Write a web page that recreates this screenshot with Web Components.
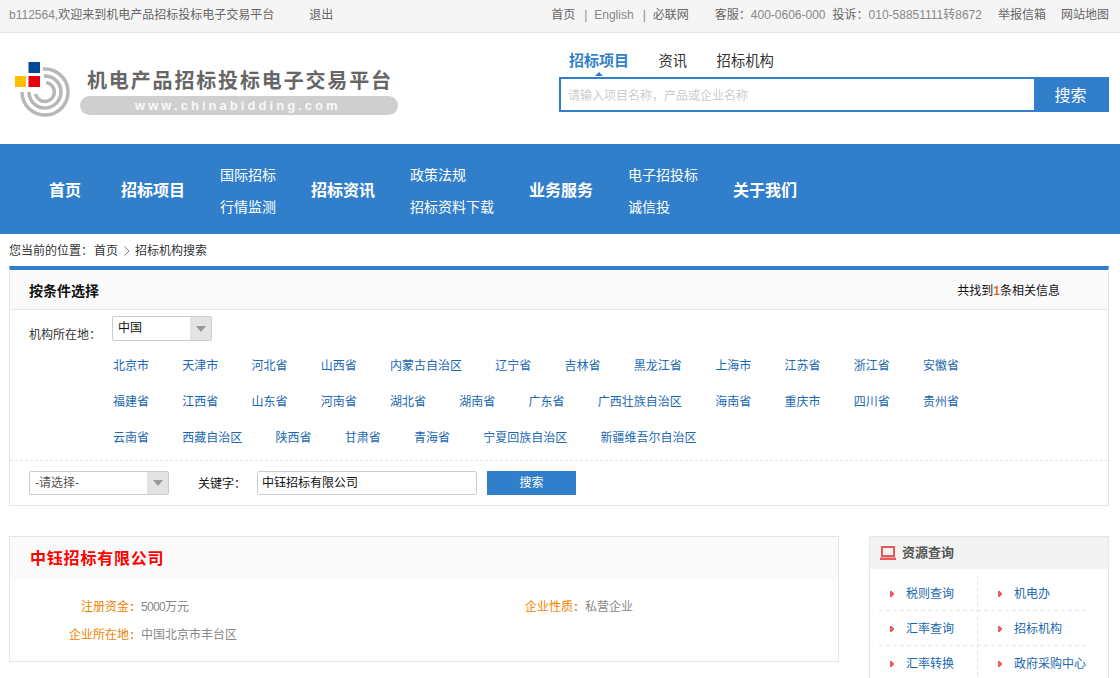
<!DOCTYPE html>
<html lang="zh-CN">
<head>
<meta charset="utf-8">
<title>招标机构搜索</title>
<style>
html,body{margin:0;padding:0;height:678px;overflow:hidden;background:#fff}
body{font:12px/18px "Liberation Sans","Noto Sans CJK SC",sans-serif;color:#333}
</style>
</head>
<body>
<x-topbar></x-topbar>
<x-masthead></x-masthead>
<x-mainnav></x-mainnav>
<x-crumb></x-crumb>
<x-page>
  <x-filter>
    <a>北京市</a><a>天津市</a><a>河北省</a><a>山西省</a><a>内蒙古自治区</a><a>辽宁省</a><a>吉林省</a><a>黑龙江省</a><a>上海市</a><a>江苏省</a><a>浙江省</a><a>安徽省</a>
    <a>福建省</a><a>江西省</a><a>山东省</a><a>河南省</a><a>湖北省</a><a>湖南省</a><a>广东省</a><a>广西壮族自治区</a><a>海南省</a><a>重庆市</a><a>四川省</a><a>贵州省</a>
    <a>云南省</a><a>西藏自治区</a><a>陕西省</a><a>甘肃省</a><a>青海省</a><a>宁夏回族自治区</a><a>新疆维吾尔自治区</a>
  </x-filter>
  <x-columns>
    <x-company name="中钰招标有限公司">
      <x-field label="注册资金"><span style="letter-spacing:-.67px">5000</span>万元</x-field>
      <x-field label="企业性质">私营企业</x-field>
      <x-field label="企业所在地">中国北京市丰台区</x-field>
    </x-company>
    <x-sidebox title="资源查询">
      <a>税则查询</a><a>机电办</a><a>汇率查询</a><a>招标机构</a><a>汇率转换</a><a>政府采购中心</a>
    </x-sidebox>
  </x-columns>
</x-page>
<script>
function def(name, html){
  customElements.define(name, class extends HTMLElement{
    constructor(){super();this.attachShadow({mode:'open'}).innerHTML=typeof html==='function'?html(this):html;}
  });
}
const BLUE='#317fcb';
def('x-topbar',`<style>
:host{display:flex;box-sizing:border-box;height:33px;background:#f5f5f5;border-bottom:1px solid #e6e6e6;padding:6px 11px 0 9px;justify-content:space-between;color:#666;line-height:18px}
.g{color:#888}.l,.r{display:flex}
.sep{color:#888;margin:0 7px 0 9px;}
</style>
<div class="l"><span><span class="g">b112564,</span>欢迎来到机电产品招标投标电子交易平台</span><span style="margin-left:35px">退出</span></div>
<div class="r"><span>首页</span><span class="sep">|</span><span class="g">English</span><span class="sep">|</span><span>必联网</span>
<span style="margin-left:26px">客服：</span><span class="g">400-0606-000</span><span style="margin-left:7px">投诉：</span><span class="g">010-58851111转8672</span><span style="margin-left:16px">举报信箱</span><span style="margin-left:15px">网站地图</span></div>`);
def('x-masthead',`<style>
:host{display:flex;box-sizing:border-box;height:111px;justify-content:space-between;padding:19px 11px 0 15px;background:#fff}
.logo{display:flex;padding-top:8px;height:60px}
svg{display:block;width:58px;height:58px;margin-top:2px;flex:none}
.txt{margin:9px 0 0 7px;width:318px}
.t{font-size:20px;line-height:24px;font-weight:700;color:#666;letter-spacing:1.85px;padding-left:7px;white-space:nowrap}
.p{height:19px;margin-top:3px;border-radius:10px;background:#cfcfcf;color:#f8f8f8;font-size:13px;line-height:20px;font-weight:700;letter-spacing:3.05px;padding-left:55px;box-sizing:border-box;white-space:nowrap}
.s{width:550px}
.tabs{display:flex;gap:29.500px;padding-left:10px;font-size:14.3px;line-height:18px;color:#333;height:18px}
.on{color:${BLUE};font-weight:700;position:relative;font-size:15px}
.on::after{content:"";position:absolute;left:50%;margin-left:-4px;bottom:-6px;border:4px solid transparent;border-top:0;border-bottom:4px solid ${BLUE}}
.box{display:flex;height:35px;margin-top:7px;border:2px solid ${BLUE};box-sizing:border-box}
.in{flex:1;background:#fff;color:#ccc;font-size:12px;line-height:31px;padding:2px 0 0 7px;box-sizing:border-box}
.b{width:73px;background:${BLUE};color:#fff;font-size:16px;line-height:33px;text-align:center;padding-right:0}
</style>
<div class="logo">
<svg viewBox="0 0 58 58" aria-hidden="true">
<g fill="none" stroke="#b7b7b7" stroke-width="3.5" transform="translate(0 -1)">
<path d="M28 8.100A23 23 0 1 1 7 31"/><path d="M29 15A16 16 0 1 1 14 31"/><path d="M31 21.600A9.500 9.500 0 1 1 20.600 33"/></g>
<rect x="13.500" y="0" width="11.500" height="11" fill="#00499b"/>
<rect x="0" y="14" width="11" height="11" fill="#ffc000"/>
<rect x="13.500" y="14" width="11.500" height="11" fill="#e60012"/>
</svg>
<div class="txt"><div class="t">机电产品招标投标电子交易平台</div><div class="p">www.chinabidding.com</div></div>
</div>
<div class="s"><div class="tabs"><span class="on">招标项目</span><span>资讯</span><span>招标机构</span></div>
<div class="box"><div class="in">请输入项目名称，产品或企业名称</div><div class="b">搜索</div></div></div>`);
def('x-mainnav',`<style>
:host{display:flex;box-sizing:border-box;height:90px;background:${BLUE};color:#fff;padding:4px 0 0 49px;align-items:center;gap:35px}
.m{font-size:16px;font-weight:700;white-space:nowrap}
.c{display:flex;flex-direction:column;gap:14px;font-size:14px;line-height:18px;white-space:nowrap}
</style>
<span class="m" style="margin-right:5px">首页</span><span class="m">招标项目</span>
<div class="c"><span>国际招标</span><span>行情监测</span></div>
<span class="m">招标资讯</span>
<div class="c"><span>政策法规</span><span>招标资料下载</span></div>
<span class="m">业务服务</span>
<div class="c"><span>电子招投标</span><span>诚信投</span></div>
<span class="m">关于我们</span>`);
def('x-crumb',`<style>
:host{display:flex;box-sizing:border-box;height:32px;align-items:center;padding:2px 0 0 9px;color:#333}
svg{width:6px;height:10px;margin:0 5px 0 6px}
</style><span>您当前的位置：</span><span style="margin-left:1px">首页</span>
<svg viewBox="0 0 6 10"><path d="M.5.5 5 5 .5 9.500" fill="none" stroke="#888"/></svg><span>招标机构搜索</span>`);
def('x-page',`<style>:host{display:block;width:1100px;margin-left:9px}</style><slot></slot>`);
def('x-select',`<style>
:host{display:flex;box-sizing:border-box;height:25px;border:1px solid #ccc;border-radius:2px;background:#fff;color:#111;line-height:23px}
.v{flex:1;padding-left:5px}
.a{width:21px;background:#e3e3e3;display:flex;align-items:center;justify-content:center}
.a::after{content:"";border:5px solid transparent;border-top:6px solid #999;border-bottom:0}
</style><div class="v"><slot></slot></div><div class="a"></div>`);
def('x-filter',`<style>
:host{display:block;box-sizing:border-box;border-top:4px solid ${BLUE};border-left:1px solid #e6e6e6;border-right:1px solid #e6e6e6;border-bottom:1px solid #e6e6e6;height:240px}
.h{display:flex;justify-content:space-between;box-sizing:border-box;height:40px;background:#fafafa;border-bottom:1px solid #e6e6e6;padding:12px 48px 0 19px;color:#111}
.h b{font-weight:700;font-size:14px}.h i{font-style:normal;color:#e26b24;font-weight:700}
.loc{display:flex;padding:6px 0 6px 19px}
.loc span{margin-top:10px;height:15px;width:83px}
.loc x-select{width:100px}
.p{display:flex;flex-wrap:wrap;column-gap:33.25px;width:860px;padding:1px 0 4px 103px}
::slotted(a){color:#1a68b2;line-height:36px;white-space:nowrap}
.q{display:flex;align-items:flex-start;border-top:1px dashed #e3e3e3;padding:10px 0 0 19px;height:34px}
.q x-select{width:140px;height:24px;color:#555}
.lab{margin:4px 11px 0 29px;color:#111}
.i{box-sizing:border-box;width:220px;height:24px;border:1px solid #ccc;border-radius:2px;line-height:23px;padding-left:4px;color:#111}
.go{width:89px;height:24px;margin-left:10px;background:${BLUE};color:#fff;text-align:center;line-height:24px}
</style>
<div class="h"><b>按条件选择</b><span>共找到<i>1</i>条相关信息</span></div>
<div class="loc"><span>机构所在地：</span><x-select>中国</x-select></div>
<div class="p"><slot></slot></div>
<div class="q"><x-select>-请选择-</x-select><span class="lab">关键字：</span><div class="i">中钰招标有限公司</div><div class="go">搜索</div></div>`);
def('x-columns',`<style>:host{display:flex;gap:30px;margin-top:30px}</style><slot></slot>`);
def('x-company',h=>`<style>
:host{display:block;box-sizing:border-box;width:830px;height:126px;border:1px solid #e6e6e6}
.h{height:42px;background:#fafafa;color:#f00;font-size:16px;font-weight:700;letter-spacing:.8px;line-height:43px;padding-left:20px}
.g{display:grid;grid-template-columns:444px 1fr;grid-auto-rows:28px;padding-top:14px}
</style><div class="h">${h.getAttribute('name')}</div><div class="g"><slot></slot></div>`);
def('x-field',h=>`<style>
:host{display:flex;align-items:center;color:#888}
.l{width:125px;text-align:right;color:#f08300;margin-right:6px;white-space:nowrap}
.l i{display:inline-block;width:6px;text-align:center;font-style:normal;font-weight:700}
</style><span class="l">${h.getAttribute('label')}<i>:</i></span><span><slot></slot></span>`);
def('x-sidebox',h=>`<style>
:host{display:block;box-sizing:border-box;width:240px;height:142px;border:1px solid #e6e6e6;border-bottom:0;overflow:hidden}
.h{display:flex;align-items:center;height:32px;background:#f3f3f3;padding-left:10px;color:#555;font-size:13px;font-weight:700}
svg{width:16px;height:14px;margin-right:6px}
.g{display:grid;grid-template-columns:108px 108px;grid-auto-rows:35px;margin:7px 0 0 9px;
 background:repeating-linear-gradient(90deg,#e3e3e3 0 4px,transparent 4px 7px) 0 34px/208px 1px no-repeat,repeating-linear-gradient(90deg,#e3e3e3 0 4px,transparent 4px 7px) 0 69px/208px 1px no-repeat,repeating-linear-gradient(0deg,#e3e3e3 0 4px,transparent 4px 7px) 98px 0/1px 100px no-repeat}
.g ::slotted(a){color:#1a68b2;line-height:36px;padding-left:27px;white-space:nowrap;background:conic-gradient(from 225deg at 100% 50%,#ee5b60 0 90deg,transparent 90deg) 11px 15px/4px 6px no-repeat}
</style><div class="h"><svg viewBox="0 0 16 14"><path d="M2 1h12v9H2z" fill="none" stroke="#e8595e" stroke-width="2"/><path d="M0 11.500h16V14H0z" fill="#e8595e"/></svg>${h.getAttribute('title')}</div><div class="g"><slot></slot></div>`);
</script>
</body>
</html>
